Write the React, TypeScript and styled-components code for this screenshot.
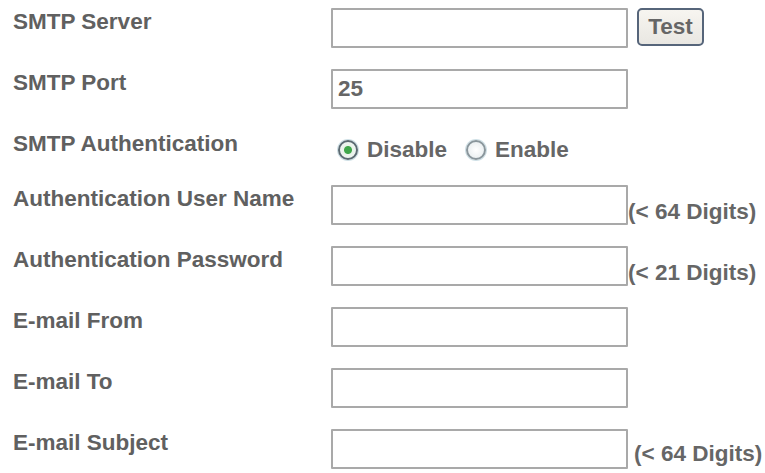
import React, { useState } from "react";
import styled, { createGlobalStyle } from "styled-components";

const GlobalStyle = createGlobalStyle`
  body {
    margin: 0;
    background: #ffffff;
    font-family: "Liberation Sans", Arial, sans-serif;
  }
`;

const Form = styled.div`
  display: flex;
  flex-direction: column;
  gap: 21px;
  padding: 8px 0 0 13px;
  font-size: 22.5px;
  font-weight: bold;
  color: #606060;
`;

const Row = styled.div<{ $short?: boolean }>`
  display: flex;
  align-items: flex-start;
  height: ${(p) => (p.$short ? "34px" : "40px")};
`;

const Label = styled.div`
  width: 318px;
  flex: none;
  padding-top: 1px;
  line-height: 26px;
`;

const TextInput = styled.input`
  box-sizing: border-box;
  width: 297px;
  height: 40px;
  margin: 0;
  padding: 0 5px;
  border: 2px solid #a9a9a9;
  border-radius: 1px;
  background: #fff;
  font-family: inherit;
  font-size: 22.5px;
  font-weight: bold;
  color: #666;
  outline: none;
`;

const TestButton = styled.button`
  box-sizing: border-box;
  margin-left: 9px;
  height: 38px;
  width: 67px;
  padding: 0;
  border: 2px solid #56657a;
  border-radius: 5px;
  background: linear-gradient(#f7f5f0, #e9e7e2);
  font-family: inherit;
  font-size: 22.5px;
  font-weight: bold;
  color: #666;
  cursor: pointer;
`;

const Hint = styled.span<{ $gap?: number; $lift?: number }>`
  align-self: flex-end;
  margin-left: ${(p) => p.$gap ?? 0}px;
  margin-bottom: ${(p) => p.$lift ?? 0}px;
  line-height: 26px;
  color: #666;
`;

const RadioGroup = styled.div`
  display: flex;
  align-items: center;
  gap: 19px;
  padding-top: 10px;
  margin-left: 7px;
  line-height: 20px;
  color: #666;
`;

const RadioOption = styled.label`
  display: flex;
  align-items: center;
  gap: 9px;
  cursor: pointer;
`;

const RadioDot = styled.span<{ $on: boolean }>`
  box-sizing: border-box;
  width: 20px;
  height: 20px;
  border-radius: 50%;
  border: 2px solid ${(p) => (p.$on ? "#5b6a72" : "#8a969c")};
  box-shadow: 0 0 0 1px #cfe0e6;
  background: ${(p) =>
    p.$on
      ? "radial-gradient(circle, #3fa64a 0 3.5px, #e9f3ea 4.5px, #f2f5f5 100%)"
      : "radial-gradient(circle, #ffffff 0, #e4eaec 100%)"};
`;

export default function App() {
  const [auth, setAuth] = useState("disable");

  return (
    <>
      <GlobalStyle />
      <Form>
        <Row>
          <Label>SMTP Server</Label>
          <TextInput />
          <TestButton>Test</TestButton>
        </Row>
        <Row>
          <Label>SMTP Port</Label>
          <TextInput defaultValue="25" />
        </Row>
        <Row $short>
          <Label>SMTP Authentication</Label>
          <RadioGroup>
            <RadioOption onClick={() => setAuth("disable")}>
              <RadioDot $on={auth === "disable"} />
              Disable
            </RadioOption>
            <RadioOption onClick={() => setAuth("enable")}>
              <RadioDot $on={auth === "enable"} />
              Enable
            </RadioOption>
          </RadioGroup>
        </Row>
        <Row>
          <Label>Authentication User Name</Label>
          <TextInput />
          <Hint>(&lt; 64 Digits)</Hint>
        </Row>
        <Row>
          <Label>Authentication Password</Label>
          <TextInput type="password" />
          <Hint>(&lt; 21 Digits)</Hint>
        </Row>
        <Row>
          <Label>E-mail From</Label>
          <TextInput />
        </Row>
        <Row>
          <Label>E-mail To</Label>
          <TextInput />
        </Row>
        <Row>
          <Label>E-mail Subject</Label>
          <TextInput />
          <Hint $gap={6} $lift={2}>(&lt; 64 Digits)</Hint>
        </Row>
      </Form>
    </>
  );
}
